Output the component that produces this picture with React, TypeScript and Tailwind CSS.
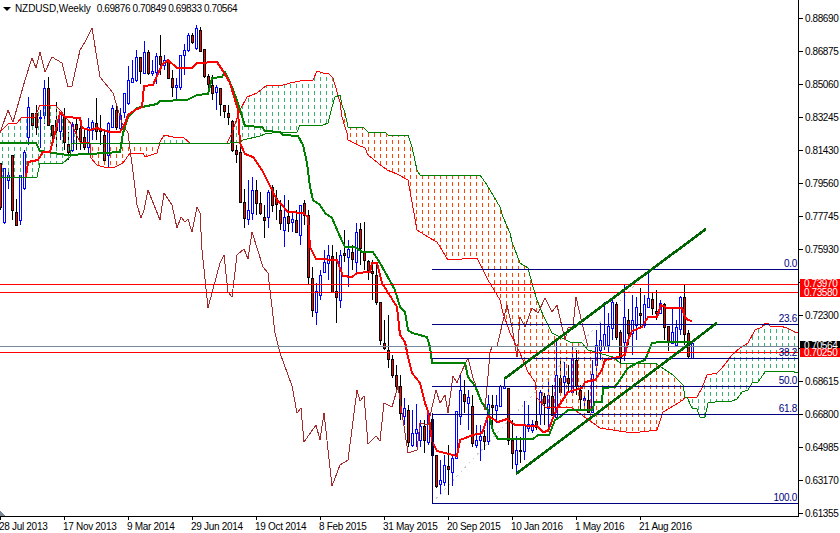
import React from "react";

type Pt = [number, number];

// hi, body top, body bottom, lo, bull -- one row per weekly bar, 4px apart
const bars: number[][] = [
  [163,163,207,210,0],[168,168,222,224,1],[170,175,180,189,1],[155,155,210,220,0],[199,212,225,226,0],[175,175,220,225,1],[150,152,188,190,1],[97,107,137,145,1],
  [113,113,125,130,0],[105,113,127,135,0],[110,117,118,148,1],[80,88,115,124,1],[77,88,125,125,0],[125,125,135,145,0],[102,120,130,150,0],[113,113,131,140,1],
  [108,117,142,150,0],[132,144,152,160,0],[122,124,150,152,1],[117,124,129,150,0],[120,128,141,150,0],[130,137,147,150,0],[118,127,147,153,1],[120,122,130,140,1],
  [98,123,131,140,0],[115,128,131,145,0],[130,135,160,165,0],[122,123,155,168,1],[105,108,127,128,1],[106,110,127,130,0],[108,115,128,130,1],[93,93,112,118,1],
  [66,80,103,105,1],[60,78,82,83,1],[50,57,80,82,1],[57,57,71,84,0],[41,52,73,73,1],[50,52,73,75,0],[60,71,73,76,1],[53,56,72,84,1],
  [35,56,64,75,0],[55,60,65,70,1],[60,60,78,79,0],[70,78,87,97,0],[78,85,87,100,1],[55,55,87,90,1],[44,50,55,75,1],[33,35,50,52,1],
  [33,35,42,44,0],[25,28,48,50,1],[27,30,51,52,0],[49,49,76,78,0],[74,76,84,90,0],[75,85,93,100,0],[85,87,92,110,1],[88,88,104,116,0],
  [105,105,111,118,0],[105,113,117,125,0],[120,121,150,152,0],[145,150,154,163,0],[143,152,202,202,0],[189,202,218,228,0],[180,210,219,225,1],[177,190,213,220,1],
  [180,190,203,215,0],[192,203,213,215,0],[205,217,220,238,0],[190,192,217,228,1],[185,187,205,212,0],[190,198,204,220,0],[200,210,223,230,0],[195,217,230,247,1],
  [200,216,223,232,0],[212,219,222,232,1],[210,220,232,233,0],[205,205,235,245,1],[200,203,215,225,0],[210,215,277,285,0],[267,278,310,317,0],[283,291,312,325,1],
  [270,275,295,300,1],[250,262,272,273,1],[245,255,263,280,1],[245,256,292,292,0],[252,291,297,323,0],[250,255,300,308,1],[230,253,255,262,0],[240,249,257,287,1],
  [245,252,259,270,0],[223,232,262,273,1],[223,229,248,265,0],[222,252,260,270,0],[260,261,270,280,0],[260,271,273,300,0],[262,275,302,305,0],[302,302,340,345,0],
  [320,343,348,350,0],[315,350,359,368,0],[355,359,375,378,0],[365,375,386,390,0],[375,386,413,420,0],[398,408,416,425,1],[405,410,442,447,0],[410,433,445,447,1],
  [404,429,433,447,1],[420,426,440,447,1],[420,426,440,453,0],[413,413,442,445,1],[413,419,455,460,0],[455,455,486,488,0],[460,480,484,494,1],[455,465,482,486,1],
  [445,466,469,495,0],[455,458,472,486,1],[411,411,458,459,1],[375,390,416,425,1],[380,394,401,413,0],[390,397,403,430,1],[395,406,443,447,0],[425,440,445,448,1],
  [425,436,440,461,1],[430,436,441,450,0],[395,404,441,445,1],[395,405,407,425,0],[395,405,410,423,1],[385,386,406,407,1],[378,386,388,388,1],[388,388,440,445,0],
  [420,440,453,469,0],[436,450,464,473,1],[437,450,451,463,0],[401,424,451,460,1],[405,424,428,432,1],[420,424,430,433,1],[395,421,427,430,0],[390,392,414,425,1],
  [393,396,403,425,0],[380,395,408,430,1],[385,396,415,415,0],[340,375,417,420,1],[360,378,392,395,0],[362,376,382,395,1],[365,378,383,392,0],[342,358,392,395,1],
  [350,360,386,395,0],[385,390,399,410,0],[395,398,400,410,1],[390,400,412,413,0],[360,374,412,413,1],[330,345,365,380,1],[323,340,350,360,1],[302,334,346,350,1],
  [313,326,345,352,1],[300,302,328,340,1],[302,304,337,340,0],[330,332,357,366,0],[285,317,342,361,1],[309,320,333,345,0],[295,320,333,355,1],[297,307,325,340,1],
  [288,313,315,327,0],[295,304,325,328,1],[270,298,307,307,1],[292,299,308,315,0],[290,311,313,320,0],[300,303,313,314,1],[303,304,327,340,0],[326,326,341,351,0],
  [308,332,343,344,1],[320,327,345,345,1],[296,297,329,335,1],[285,297,334,345,0],[330,333,356,358,0],[343,343,358,359,1],
];

const tenkan: Pt[] = [[26,177],[28,162],[38,160],[43,152],[50,152],[55,133],[60,113],[65,117],[80,118],[82,128],[90,130],[97,128],[110,132],[120,132],[125,124],[128,115],[135,110],[142,107],[144,86],[153,85],[162,65],[168,60],[177,68],[192,68],[197,63],[217,62],[223,71],[230,83],[238,110],[240,143],[245,154],[253,157],[262,170],[267,180],[277,200],[280,203],[288,212],[303,213],[308,217],[310,247],[316,259],[337,260],[343,276],[352,277],[357,273],[370,272],[372,263],[377,263],[382,283],[397,307],[400,335],[405,342],[408,357],[412,373],[420,383],[425,403],[428,411],[432,441],[437,451],[457,456],[460,440],[473,435],[482,433],[488,416],[498,422],[507,419],[515,425],[537,426],[543,432],[548,431],[553,418],[558,407],[568,392],[582,388],[585,382],[595,380],[602,370],[605,360],[618,357],[625,355],[628,340],[632,331],[642,327],[648,317],[657,317],[661,305],[667,308],[682,308],[685,317],[688,320],[692,321]];

const kijun: Pt[] = [[0,143],[36,143],[40,151],[67,155],[90,154],[120,152],[123,133],[128,117],[137,108],[157,104],[160,101],[187,100],[197,95],[208,94],[212,78],[222,77],[225,72],[232,87],[238,103],[245,126],[262,127],[265,131],[280,132],[283,135],[298,136],[303,145],[307,163],[310,187],[313,200],[320,205],[325,213],[332,218],[338,232],[343,243],[345,247],[355,247],[362,252],[373,252],[380,263],[395,290],[400,307],[405,312],[408,330],[412,333],[427,337],[430,347],[432,363],[465,363],[468,377],[475,386],[482,403],[488,410],[493,431],[498,439],[533,439],[538,435],[549,435],[555,420],[560,417],[568,410],[592,410],[595,402],[602,402],[603,388],[615,387],[628,368],[637,363],[645,360],[652,343],[660,342],[692,342]];

const chikou: Pt[] = [[0,133],[8,110],[13,122],[25,80],[32,58],[36,68],[40,52],[45,72],[52,57],[62,63],[68,87],[72,86],[80,50],[85,42],[92,28],[100,77],[113,93],[122,123],[128,133],[134,180],[137,205],[141,218],[144,210],[148,190],[160,220],[164,193],[172,205],[177,228],[181,217],[185,222],[188,219],[192,232],[197,207],[200,213],[202,250],[208,308],[220,263],[224,255],[228,292],[232,297],[237,255],[244,249],[248,259],[252,232],[263,267],[268,273],[275,333],[280,353],[292,386],[297,413],[301,408],[304,442],[316,425],[320,440],[324,413],[332,486],[340,465],[348,460],[357,390],[360,401],[364,396],[368,444],[376,436],[380,441],[384,403],[392,407],[398,386],[408,453],[417,450],[420,423],[428,425],[436,390],[440,403],[445,395],[448,413],[453,376],[457,383],[460,375],[468,358],[473,378],[485,410],[490,353],[492,346],[497,346],[507,305],[512,327],[517,357],[520,317],[525,327],[532,308],[538,313],[545,298],[552,312],[557,305],[565,340],[568,328],[573,327],[576,297],[582,323],[588,347]];

const spanA: Pt[] = [[0,132],[8,124],[17,123],[22,117],[35,117],[40,105],[55,105],[60,110],[72,125],[80,142],[90,143],[90,157],[97,165],[107,168],[115,167],[123,163],[130,153],[143,153],[145,157],[157,153],[160,142],[164,135],[173,137],[183,137],[190,143],[227,143],[232,133],[240,110],[247,97],[257,93],[267,85],[280,86],[290,83],[300,81],[313,80],[317,71],[323,73],[328,73],[333,78],[335,85],[340,102],[342,117],[345,127],[347,133],[348,140],[358,145],[365,148],[368,155],[378,163],[387,170],[397,174],[408,180],[412,202],[417,230],[428,237],[437,242],[448,260],[477,258],[483,270],[488,280],[500,300],[503,313],[510,333],[520,353],[528,372],[535,382],[537,398],[545,407],[572,408],[600,428],[632,433],[657,430],[663,412],[670,408],[683,400],[685,397],[697,397],[702,388],[707,375],[717,373],[722,368],[732,355],[740,348],[748,343],[755,330],[762,327],[765,323],[768,323],[770,326],[780,326],[787,328],[795,332],[798,332]];

const spanB: Pt[] = [[0,177],[37,177],[40,163],[62,164],[70,157],[72,143],[230,143],[240,142],[243,140],[260,136],[265,134],[280,132],[292,133],[297,132],[300,125],[323,125],[328,123],[332,107],[335,97],[340,95],[342,105],[345,113],[348,127],[363,127],[368,132],[385,132],[388,135],[408,135],[412,147],[417,170],[420,175],[480,175],[487,185],[500,207],[503,217],[510,233],[512,242],[520,263],[528,268],[533,287],[537,300],[543,315],[552,333],[560,337],[570,342],[582,343],[588,350],[613,357],[620,363],[655,363],[673,375],[683,385],[685,397],[687,397],[692,408],[697,409],[700,417],[705,417],[708,403],[715,402],[732,401],[737,399],[742,392],[748,390],[752,383],[758,382],[765,372],[773,371],[790,371],[798,373]];

const fibLevels = [
  { y: 269, label: "0.0" },
  { y: 324, label: "23.6" },
  { y: 358, label: "38.2" },
  { y: 386, label: "50.0" },
  { y: 414, label: "61.8" },
  { y: 503, label: "100.0" },
];

// empty where a price tag sits over the tick
const prices = ["0.88690","0.86875","0.85060","0.83245","0.81430","0.79560","0.77745","0.75930","","0.72300","","0.68615","0.66800","0.64985","0.63170","0.61355"];
const dates = ["28 Jul 2013","17 Nov 2013","9 Mar 2014","29 Jun 2014","19 Oct 2014","8 Feb 2015","31 May 2015","20 Sep 2015","10 Jan 2016","1 May 2016","21 Aug 2016"];

function toPoints(pts: Pt[]) {
  return pts.map((p) => p.join(",")).join(" ");
}

// y of a polyline at a given x, straight between its points
function yAt(pts: Pt[], x: number) {
  for (let i = 1; i < pts.length; i++) {
    if (x <= pts[i][0]) {
      const [x0, y0] = pts[i - 1];
      const [x1, y1] = pts[i];
      return x1 === x0 ? y1 : y0 + ((y1 - y0) * (x - x0)) / (x1 - x0);
    }
  }
  return pts[pts.length - 1][1];
}

function Cloud() {
  const columns = [];
  for (let x = 2; x <= 796; x += 6) {
    const a = Math.round(yAt(spanA, x));
    const b = Math.round(yAt(spanB, x));
    if (Math.abs(a - b) < 2) continue;
    const top = Math.min(a, b);
    columns.push(
      <line
        key={x}
        x1={x + 0.5}
        x2={x + 0.5}
        y1={top}
        y2={Math.max(a, b)}
        stroke={a < b ? "#3cb371" : "#ff4500"}
        strokeDasharray="4 3"
        strokeDashoffset={top % 7}
      />
    );
  }
  return <g>{columns}</g>;
}

function Candles() {
  return (
    <g>
      {bars.map(([hi, top, bot, lo, bull], i) => {
        const x = i * 4;
        const color = bull ? "#0000ff" : "#000000";
        return (
          <g key={i}>
            <line x1={x + 0.5} x2={x + 0.5} y1={hi} y2={lo} stroke={color} />
            <rect x={x - 0.5} y={top + 0.5} width={2} height={Math.max(bot - top, 1)} fill={bull ? "#ffffff" : "#ff0000"} stroke={color} />
          </g>
        );
      })}
    </g>
  );
}

function Chart() {
  return (
    <svg width={798} height={516} className="block" shapeRendering="crispEdges">
      <line x1={432} y1={503} x2={650} y2={269} stroke="#c8c8c8" strokeDasharray="2 4" />
      <Candles />
      <Cloud />
      <polyline points={toPoints(spanA)} fill="none" stroke="#ff0000" />
      <polyline points={toPoints(spanB)} fill="none" stroke="#008000" />
      <polyline points={toPoints(chikou)} fill="none" stroke="#a52a2a" />
      <polyline points={toPoints(kijun)} fill="none" stroke="#008000" strokeWidth={2} />
      <polyline points={toPoints(tenkan)} fill="none" stroke="#ff0000" strokeWidth={2} />

      <line x1={0} x2={798} y1={284.5} y2={284.5} stroke="#ff0000" />
      <line x1={0} x2={798} y1={292.5} y2={292.5} stroke="#ff0000" />
      <line x1={0} x2={798} y1={346.5} y2={346.5} stroke="#778899" />
      <line x1={0} x2={798} y1={352.5} y2={352.5} stroke="#ff0000" />

      {fibLevels.map((f) => (
        <g key={f.label}>
          <line x1={432} x2={798} y1={f.y + 0.5} y2={f.y + 0.5} stroke="#000080" />
          <text x={797} y={f.y - 2} textAnchor="end" fill="#000080" shapeRendering="auto" className="text-[10px] tracking-[-0.3px]">
            {f.label}
          </text>
        </g>
      ))}
      <line x1={432.5} x2={432.5} y1={414} y2={503} stroke="#000080" />

      <line x1={504} y1={379} x2={706} y2={229} stroke="#006400" strokeWidth={2.6} />
      <line x1={516} y1={474} x2={717} y2={323} stroke="#006400" strokeWidth={2.6} />

      <polygon points="0,511 5,516 0,516" fill="#778899" />
    </svg>
  );
}

function App() {
  return (
    <div className="relative w-[840px] h-[533px] overflow-hidden bg-white text-black font-['Liberation_Sans',Arial,sans-serif] text-[10px] tracking-[-0.4px]">
      <div className="flex h-[517px]">
        <div className="relative w-[799px] border-r border-b border-black">
          <Chart />
          <div className="absolute top-[3px] left-[3px] flex items-center gap-[4px] leading-[11px]">
            <span className="w-0 h-0 border-x-[4px] border-t-[4px] border-x-transparent border-t-black" />
            <span className="tracking-[-0.1px]">NZDUSD,Weekly</span>
            <span className="ml-[2px] whitespace-pre">0.69876 0.70849 0.69833 0.70564</span>
          </div>
        </div>
        <div className="flex-1 flex flex-col pt-[2px]">
          {prices.map((p, i) => (
            <div key={i} className="h-[33px] flex items-center shrink-0">
              <span className="w-[4px] h-px bg-black mr-[2px]" />
              <span>{p}</span>
            </div>
          ))}
        </div>
      </div>

      <div className="grid grid-cols-[repeat(11,64px)]">
        {dates.map((d) => (
          <div key={d} className="flex flex-col">
            <span className="w-px h-[3px] bg-black" />
            <span className="whitespace-nowrap leading-[12px] mt-[1px] -ml-px tracking-[-0.3px]">{d}</span>
          </div>
        ))}
      </div>

      <div className="absolute left-[800px] top-[279px] w-[40px] h-[18px] pl-[4px] bg-[#ff0000] text-white leading-[9px]">
        <div>0.73970</div>
        <div>0.73580</div>
      </div>
      <div className="absolute left-[800px] top-[341px] w-[40px] h-[7px] pl-[4px] bg-black text-white leading-[9px] overflow-hidden">0.70564</div>
      <div className="absolute left-[800px] top-[348px] w-[40px] h-[9px] pl-[4px] bg-[#ff0000] text-white leading-[9px]">0.70250</div>
    </div>
  );
}

export default App;
